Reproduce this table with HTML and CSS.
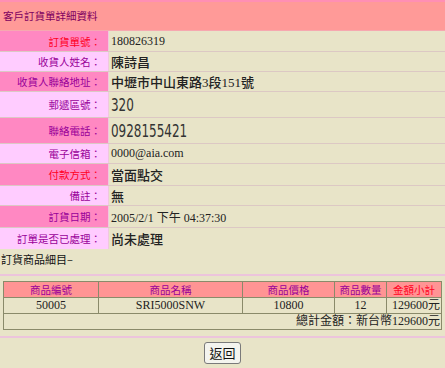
FILE: index.html
```html
<!DOCTYPE html>
<html lang="zh-Hant">
<head>
<meta charset="utf-8">
<title>客戶訂貨單詳細資料</title>
<link rel="stylesheet" href="styles.css">
</head>
<body>
<div class="page">
  <div class="title">客戶訂貨單詳細資料</div>
  <div class="details">
    <div class="row">
      <div class="label label--dark label--red">訂貨單號：</div>
      <div class="value value--serif">180826319</div>
    </div>
    <div class="row">
      <div class="label label--light">收貨人姓名：</div>
      <div class="value value--cjk">陳詩昌</div>
    </div>
    <div class="row">
      <div class="label label--dark">收貨人聯絡地址：</div>
      <div class="value value--cjk">中壢市中山東路3段151號</div>
    </div>
    <div class="row row--tall">
      <div class="label label--light">郵遞區號：</div>
      <div class="value"><span class="big">320</span></div>
    </div>
    <div class="row row--tall">
      <div class="label label--dark">聯絡電話：</div>
      <div class="value"><span class="big">0928155421</span></div>
    </div>
    <div class="row">
      <div class="label label--light">電子信箱：</div>
      <div class="value value--serif">0000@aia.com</div>
    </div>
    <div class="row row--mid">
      <div class="label label--dark label--red">付款方式：</div>
      <div class="value value--cjk">當面點交</div>
    </div>
    <div class="row">
      <div class="label label--light">備註：</div>
      <div class="value value--cjk">無</div>
    </div>
    <div class="row row--mid">
      <div class="label label--dark">訂貨日期：</div>
      <div class="value value--serif">2005/2/1 下午 04:37:30</div>
    </div>
    <div class="row row--mid">
      <div class="label label--light">訂單是否已處理：</div>
      <div class="value value--cjk">尚未處理</div>
    </div>
  </div>

  <div class="subhead">訂貨商品細目–</div>
  <div class="rule"></div>

  <table class="items">
    <colgroup>
      <col class="c1"><col class="c2"><col class="c3"><col class="c4"><col class="c5">
    </colgroup>
    <thead>
      <tr>
        <th>商品編號</th>
        <th>商品名稱</th>
        <th>商品價格</th>
        <th>商品數量</th>
        <th class="th--red">金額小計</th>
      </tr>
    </thead>
    <tbody>
      <tr>
        <td>50005</td>
        <td>SRI5000SNW</td>
        <td>10800</td>
        <td>12</td>
        <td class="td--right">129600元</td>
      </tr>
      <tr>
        <td colspan="5" class="total">總計金額：新台幣129600元</td>
      </tr>
    </tbody>
  </table>

  <div class="rule rule--bottom"></div>
  <div class="actions">
    <button class="btn" type="button">返回</button>
  </div>
</div>
</body>
</html>
```

FILE: styles.css
```css
html, body {
  margin: 0;
  padding: 0;
  background: #e8e4c8;
}

.page {
  width: 445px;
  font-family: "Liberation Serif", "Noto Sans CJK TC", serif;
  color: #222;
}

.title {
  height: 31px;
  box-sizing: border-box;
  border-top: 2px solid #ff8fb4;
  border-bottom: 1px solid #f6a8b0;
  background: #ff9a98;
  color: #800060;
  font-family: "Noto Sans CJK TC", sans-serif;
  font-size: 10.5px;
  line-height: 27px;
  padding-left: 3px;
}

.details {
  display: flex;
  flex-direction: column;
}

.row {
  display: grid;
  grid-template-columns: 109px 1fr;
  height: 20px;
  box-sizing: border-box;
  border-top: 1px solid #dcc8c4;
}

.row:first-child {
  border-top: none;
}

.row--tall {
  height: 26px;
}

.row--mid {
  height: 22px;
}

.label {
  display: flex;
  align-items: center;
  justify-content: flex-end;
  padding-right: 7px;
  font-family: "Noto Sans CJK TC", sans-serif;
  font-size: 10.5px;
  color: #990099;
  border-right: 1px solid #f0c8e0;
}

.label--dark {
  background: #ff88c2;
}

.label--light {
  background: #ffccff;
}

.label--red {
  color: #ff0022;
}

.value {
  display: flex;
  align-items: center;
  padding-left: 2px;
  color: #222;
  white-space: nowrap;
}

.value--serif {
  font-family: "Liberation Serif", "Noto Sans CJK TC", serif;
  font-size: 12px;
}

.value--cjk {
  font-family: "Liberation Serif", "Noto Sans CJK TC", serif;
  font-size: 13px;
  font-weight: 500;
}

.big {
  display: inline-block;
  font-family: "DejaVu Sans Condensed", "DejaVu Sans", sans-serif;
  font-size: 18px;
  font-weight: 300;
  color: #333;
  transform: scaleX(0.74);
  transform-origin: left center;
}

.subhead {
  height: 20px;
  padding-left: 1px;
  font-family: "Noto Sans CJK TC", sans-serif;
  font-size: 11px;
  line-height: 20px;
  color: #111;
}

.rule {
  height: 2px;
  margin-top: 5px;
  background: #ecc4dc;
}

.rule--bottom {
  margin-top: 6px;
}

.items {
  margin: 5px 0 0 3px;
  width: 438px;
  table-layout: fixed;
  border-collapse: collapse;
  border: 1px solid #8a8a6a;
  font-size: 12px;
}

.items .c1 { width: 95px; }
.items .c2 { width: 144px; }
.items .c3 { width: 92px; }
.items .c4 { width: 52px; }
.items .c5 { width: 55px; }

.items th,
.items td {
  border: 1px solid #8a8a6a;
  height: 15px;
  padding: 0 1px;
  text-align: center;
  line-height: 15px;
  white-space: nowrap;
}

.items th {
  background: #ff9494;
  color: #990099;
  font-family: "Noto Sans CJK TC", sans-serif;
  font-size: 10.5px;
  font-weight: normal;
}

.items .th--red {
  color: #ff0022;
}

.items td {
  font-family: "Liberation Serif", "Noto Sans CJK TC", serif;
  color: #222;
}

.items .td--right {
  text-align: right;
}

.items .total {
  text-align: right;
}

.actions {
  display: flex;
  justify-content: center;
  padding-top: 4px;
}

.btn {
  height: 22px;
  padding: 0 4px;
  font-family: "Noto Sans CJK TC", sans-serif;
  font-size: 13px;
  color: #111;
  background: #f4f4ee;
  border: 1px solid #7a7a7a;
  border-radius: 3px;
  line-height: 18px;
}
```
